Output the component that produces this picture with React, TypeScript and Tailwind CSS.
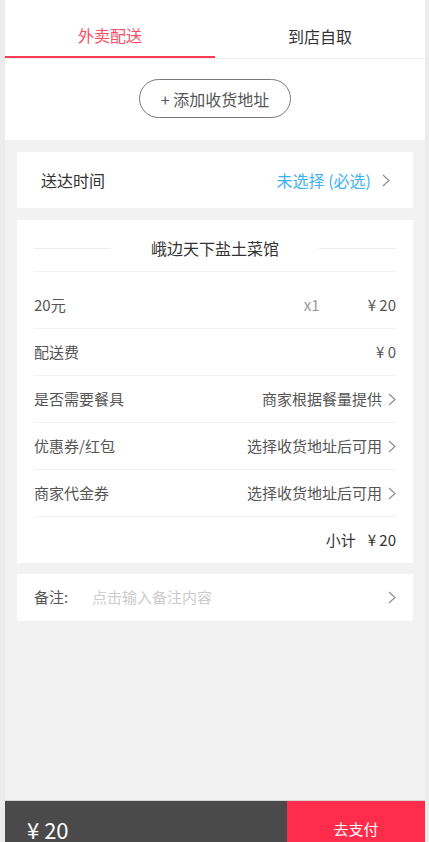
function Chevron({ className = "" }: { className?: string }) {
  return (
    <svg width="8" height="13" viewBox="0 0 8 13" className={className} fill="none">
      <polyline points="1,1 7,6.5 1,12" stroke="#8a8a8a" strokeWidth="1.1" />
    </svg>
  );
}

function Row({ label, value, arrow }: { label: string; value: string; arrow?: boolean }) {
  return (
    <div className="h-[46px] box-content flex items-center justify-between text-[15px] text-[#555] border-b border-[#f0f0f0]">
      <span>{label}</span>
      <div className="flex items-center">
        <span>{value}</span>
        {arrow && <Chevron className="ml-[6px]" />}
      </div>
    </div>
  );
}

export default function App() {
  return (
    <div className="h-[842px] overflow-hidden bg-[#ececec] font-['Noto_Sans_CJK_SC',sans-serif]">
      <div className="ml-[5px] w-[420px] h-[842px] flex flex-col bg-[#f2f2f2]">
        <div className="h-[800px] shrink-0">
          {/* tabs + address */}
          <div className="bg-white">
            <div className="flex border-b border-[#eeeeee]">
              <div className="flex-1 h-[58px] border-b-2 border-[#ff3b55] flex items-center justify-center pt-[14px] text-[16px] text-[#ff4a5f]">
                外卖配送
              </div>
              <div className="flex-1 h-[58px] flex items-center justify-center pt-[14px] text-[16px] text-[#333]">
                到店自取
              </div>
            </div>
            <div className="flex justify-center pt-[20px] pb-[22px]">
              <button className="w-[152px] h-[39px] rounded-full border border-[#7a7a7a] text-[16px] text-[#555] flex items-center justify-center">
                + 添加收货地址
              </button>
            </div>
          </div>

          <div className="px-[12px] pt-[12px]">
            {/* delivery time */}
            <div className="bg-white h-[56px] flex items-center justify-between pl-[24px] pr-[23px]">
              <span className="text-[16px] text-[#333]">送达时间</span>
              <div className="flex items-center">
                <span className="text-[16px] text-[#3eb1f5]">未选择 (必选)</span>
                <Chevron className="ml-[11px]" />
              </div>
            </div>

            {/* order card */}
            <div className="bg-white mt-[12px] px-[17px]">
              <div className="h-[52px] pt-[5px] flex items-center border-b border-[#f0f0f0]">
                <div className="flex-1 h-px bg-[#eeeeee]" />
                <span className="mx-10 text-[16px] text-[#333]">峨边天下盐土菜馆</span>
                <div className="flex-1 h-px bg-[#eeeeee]" />
              </div>
              <div className="mt-[10px] h-[46px] box-content flex items-center justify-between text-[15px] text-[#555] border-b border-[#f0f0f0]">
                <span>20元</span>
                <div className="flex items-center">
                  <span className="text-[#999] mr-[48px]">x1</span>
                  <span>¥ 20</span>
                </div>
              </div>
              <Row label="配送费" value="¥ 0" />
              <Row label="是否需要餐具" value="商家根据餐量提供" arrow />
              <Row label="优惠券/红包" value="选择收货地址后可用" arrow />
              <Row label="商家代金券" value="选择收货地址后可用" arrow />
              <div className="h-[46px] flex items-center justify-end text-[15px] text-[#333]">
                小计<span className="ml-[12px]">¥ 20</span>
              </div>
            </div>

            {/* remark */}
            <div className="bg-white mt-[11px] h-[47px] px-[17px] flex items-center text-[15px]">
              <span className="text-[#555] w-[58px]">备注:</span>
              <span className="flex-1 text-[#cccccc]">点击输入备注内容</span>
              <Chevron />
            </div>
          </div>
        </div>

        {/* bottom bar */}
        <div className="h-[58px] shrink-0 flex border-t border-[#d4d4d4]">
          <div className="flex-1 bg-[#4a4a4a] flex items-center pl-[22px] text-[22px] text-white">¥ 20</div>
          <div className="w-[138px] bg-[#ff2d4b] flex items-center justify-center text-[15px] text-white">去支付</div>
        </div>
      </div>
    </div>
  );
}
